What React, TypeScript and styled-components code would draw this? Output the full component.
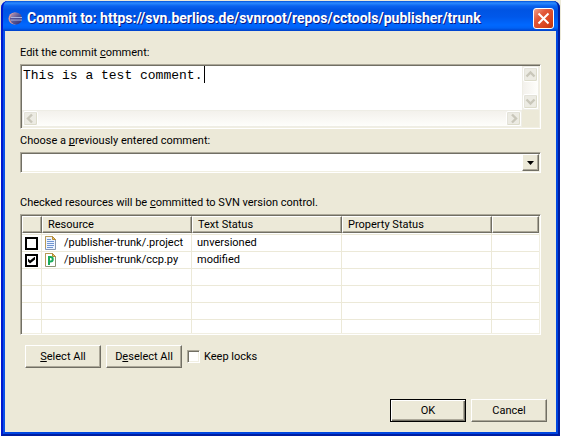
import React, { useState } from "react";
import styled, { createGlobalStyle, css } from "styled-components";

const face = "#ece9d8";
const shade = "#aca899";
const dark = "#716f64";

const GlobalStyle = createGlobalStyle`
  *, *::before, *::after { box-sizing: border-box; }
  body {
    margin: 0;
    background: linear-gradient(${face} 40px, #fff 40px);
    color: #000;
    font: 11px/14px Roboto, "Liberation Sans", Arial, sans-serif;
  }
  button, input, select { font: inherit; color: inherit; }
  u { text-underline-offset: 1px; text-decoration-thickness: 1px; text-decoration-skip-ink: none; }
`;

const Desktop = styled.div`
  min-height: 100vh;
  padding: 1px;
`;

const Dialog = styled.main`
  position: relative;
  border: 4px solid #0046e0;
  border-top: 0;
  border-left-color: #0a50e8;
  border-radius: 7px 7px 0 0;
  background: ${face};
  &::after {
    content: "";
    position: absolute;
    inset: 0 -4px -4px;
    border: 2px solid #001da0;
    border-top: 0;
    border-left-color: #0019cf;
    border-radius: 7px 7px 0 0;
    pointer-events: none;
  }
`;

const TitleBar = styled.header`
  display: flex;
  align-items: center;
  gap: 4px;
  height: 30px;
  margin: 0 -4px;
  padding: 4px 6px 0 7px;
  border-radius: 7px 7px 0 0;
  background: linear-gradient(#0050d8 0, #2b8bff 2px, #0a63ee 5px, #0054e3 9px, #0058ea 16px, #0068ff 24px, #0062f5 27px, #0040c8 30px);
`;

const Title = styled.h1`
  flex: 1;
  margin: 0;
  color: #fff;
  font: bold 14px/18px Roboto, "Noto Sans", sans-serif;
  text-shadow: 1px 1px 0 #0a1883;
  white-space: nowrap;
`;

const CloseButton = styled.button`
  display: grid;
  place-items: center;
  width: 21px;
  height: 21px;
  padding: 0;
  border: 1px solid #fff;
  border-radius: 3px;
  background: linear-gradient(135deg, #f0a08a, #e2583a 35%, #d8431c 75%, #b93510);
`;

const Content = styled.form`
  display: flex;
  flex-direction: column;
  padding: 15px 15px 10px;
`;

const Label = styled.label<{ $gap?: number }>`
  display: block;
  margin-top: ${(p) => p.$gap ?? 0}px;
  margin-bottom: 4px;
`;

const sunken = css`
  border: 1px solid;
  border-color: ${shade} #fff #fff ${shade};
  box-shadow: inset 1px 1px 0 ${dark}, inset -1px -1px 0 #f1efe2;
  background: #fff;
`;

const raised = css`
  border: 1px solid;
  border-color: #fff ${dark} ${dark} #fff;
  box-shadow: inset -1px -1px 0 ${shade};
  background: ${face};
`;

const Editor = styled.div`
  ${sunken}
  display: grid;
  grid-template: 1fr 17px / 1fr 17px;
  height: 65px;
  padding: 1px;
  background: ${face};
`;

const TextPane = styled.div`
  position: relative;
  font: 13px/17px "Liberation Mono", monospace;
  min-width: 0;
`;

const Comment = styled.textarea`
  display: block;
  width: 100%;
  height: 100%;
  padding: 1px 0 0 1px;
  border: 0;
  outline: 0;
  resize: none;
  overflow: hidden;
  background: #fff;
  color: #000;
  font: inherit;
`;

const Caret = styled.i`
  position: absolute;
  top: 0;
  left: calc(23ch + 3px);
  width: 1px;
  height: 17px;
  background: #000;
`;

const ScrollTrack = styled.div<{ $vertical?: boolean }>`
  display: flex;
  flex-direction: ${(p) => (p.$vertical ? "column" : "row")};
  justify-content: space-between;
  border: 1px solid #eeede5;
  background: linear-gradient(${(p) => (p.$vertical ? "to right" : "to bottom")}, #f3f1ec, #fefefb);
`;

const ScrollButton = styled.button`
  display: grid;
  place-items: center;
  width: 15px;
  height: 15px;
  padding: 0;
  border: 1px solid #fff;
  border-radius: 2px;
  background: #ecebe3;
  box-shadow: inset -1px -1px 0 #dddccb, inset 1px 1px 0 #e4e3da;
`;

const ComboBox = styled.div`
  ${sunken}
  display: grid;
  grid-template-columns: 1fr 17px;
  height: 21px;
  padding: 1px;
`;

const Select = styled.select`
  grid-area: 1 / 1 / 2 / 3;
  width: 100%;
  border: 0;
  outline: 0;
  appearance: none;
  background: transparent;
`;

const ComboArrow = styled.span`
  ${raised}
  grid-area: 1 / 2;
  display: grid;
  place-items: center;
  pointer-events: none;
`;

const TableFrame = styled.div`
  ${sunken}
  height: 121px;
  padding: 1px;
  overflow: hidden;
`;

const Table = styled.table`
  width: 100%;
  height: 100%;
  border-collapse: separate;
  border-spacing: 0;
  table-layout: fixed;
`;

const HeadCell = styled.th`
  ${raised}
  height: 17px;
  padding: 0 0 0 5px;
  font-weight: normal;
  text-align: left;
  line-height: 14px;
`;

const Row = styled.tr<{ $first?: boolean; $last?: boolean }>`
  height: ${(p) => (p.$last ? "auto" : p.$first ? "19px" : "17px")};
  td {
    padding: 0 0 0 5px;
    border-right: 1px solid ${face};
    border-bottom: ${(p) => (p.$last ? 0 : 1)}px solid ${face};
    line-height: 14px;
    white-space: nowrap;
    ${(p) => p.$first && css`background: linear-gradient(${face}, ${face}) 0 1px / 100% 1px no-repeat; padding-top: 2px;`}
  }
  td:first-child { padding-left: 3px; }
  td:nth-child(2) { padding-left: 3px; }
  td:last-child { border-right: 0; }
`;

const Resource = styled.span`
  display: flex;
  align-items: center;
  gap: 7px;
`;

const Check = styled.input<{ $flat?: boolean }>`
  display: grid;
  place-items: center;
  flex: none;
  width: 13px;
  height: 13px;
  margin: 0;
  appearance: none;
  ${(p) => (p.$flat ? css`border: 2px solid #000; background: #fff;` : sunken)}
  &:checked::after {
    content: "";
    width: 7px;
    height: 7px;
    background: #000;
    clip-path: polygon(0 29%, 29% 57%, 100% 0, 100% 43%, 29% 100%, 0 71%);
  }
`;

const Actions = styled.div`
  display: flex;
  align-items: center;
  gap: 5px;
  margin-top: 10px;
  padding: 0 5px;
`;

const Footer = styled.footer`
  display: flex;
  justify-content: flex-end;
  gap: 5px;
  margin: 31px -6px 0 0;
`;

const Button = styled.button<{ $primary?: boolean }>`
  ${raised}
  width: 76px;
  height: 23px;
  padding: 0;
  ${(p) =>
    p.$primary &&
    css`
      border-color: #000;
      box-shadow: inset 1px 1px 0 #fff, inset -1px -1px 0 ${dark}, inset -2px -2px 0 ${shade};
    `}
`;

const InlineLabel = styled.label`
  display: flex;
  align-items: center;
  gap: 4px;
`;

const EclipseIcon = () => (
  <svg width="15" height="15" viewBox="0 0 15 15" aria-hidden="true">
    <defs>
      <linearGradient id="orb" x1="0" y1="0" x2="1" y2="1">
        <stop offset="0" stopColor="#c9a0b4" />
        <stop offset=".5" stopColor="#5a5794" />
        <stop offset="1" stopColor="#302c72" />
      </linearGradient>
    </defs>
    <ellipse cx="6.5" cy="7.5" rx="6" ry="6" fill="#d99a9a" />
    <circle cx="8" cy="7.5" r="6" fill="url(#orb)" />
    <path d="M3 6.5h11M3 9h11" stroke="#a9b4e0" />
    <path d="M2 7.7h12" stroke="#4a4c92" />
  </svg>
);

const CloseIcon = () => (
  <svg width="13" height="13" viewBox="0 0 13 13" aria-hidden="true">
    <path d="M1.5 1.5l10 10M11.5 1.5l-10 10" stroke="#fff" strokeWidth="2" />
  </svg>
);

const arrows = {
  up: "M2.5 7.5l4-4 4 4",
  down: "M2.5 3.5l4 4 4-4",
  left: "M8 1.5l-4 4 4 4",
  right: "M5 1.5l4 4-4 4",
};

const Chevron = ({ dir }: { dir: keyof typeof arrows }) => (
  <svg width="13" height="11" viewBox="0 0 13 11" aria-hidden="true">
    <path d={arrows[dir]} fill="none" stroke="#c9c7ba" strokeWidth="2.4" />
  </svg>
);

const FileIcon = ({ python }: { python?: boolean }) => (
  <svg width="12" height="14" viewBox="0 0 12 14" aria-hidden="true">
    <path d="M.5.5h7l3 3v10H.5z" fill={python ? "#fff" : "#edf4ff"} stroke={python ? "#8b9270" : "#8797b0"} />
    <path d="M.5 12V.5h7" fill="none" stroke="#b99a55" />
    <path d="M7.5.5v3h3z" fill="#e9c56d" stroke="#b58b35" />
    {python ? (
      <path d="M4 12V4h1.5a2 2 0 0 1 0 4.5H4" fill="none" stroke="#19ab5b" strokeWidth="2" />
    ) : (
      <path d="M2 3.5h4M2 5.5h7M2 7.5h7M2 9.5h7M2 11.5h6" stroke="#7095d2" />
    )}
  </svg>
);

const resources = [
  { path: "/publisher-trunk/.project", status: "unversioned", committed: false, python: false },
  { path: "/publisher-trunk/ccp.py", status: "modified", committed: true, python: true },
];

export default function App() {
  const [checked, setChecked] = useState(resources.map((r) => r.committed));
  const [comment, setComment] = useState("This is a test comment.");

  return (
    <>
      <GlobalStyle />
      <Desktop>
        <Dialog>
          <TitleBar>
            <EclipseIcon />
            <Title>Commit to: https://svn.berlios.de/svnroot/repos/cctools/publisher/trunk</Title>
            <CloseButton type="button" aria-label="Close"><CloseIcon /></CloseButton>
          </TitleBar>
          <Content onSubmit={(e) => e.preventDefault()}>
            <Label htmlFor="comment">Edit the commit <u>c</u>omment:</Label>
            <Editor>
              <TextPane>
                <Comment id="comment" spellCheck={false} value={comment} onChange={(e) => setComment(e.target.value)} />
                <Caret />
              </TextPane>
              <ScrollTrack $vertical>
                <ScrollButton type="button" disabled aria-label="Scroll up"><Chevron dir="up" /></ScrollButton>
                <ScrollButton type="button" disabled aria-label="Scroll down"><Chevron dir="down" /></ScrollButton>
              </ScrollTrack>
              <ScrollTrack>
                <ScrollButton type="button" disabled aria-label="Scroll left"><Chevron dir="left" /></ScrollButton>
                <ScrollButton type="button" disabled aria-label="Scroll right"><Chevron dir="right" /></ScrollButton>
              </ScrollTrack>
            </Editor>
            <Label htmlFor="previous" $gap={5}>Choose a <u>p</u>reviously entered comment:</Label>
            <ComboBox>
              <Select id="previous" defaultValue=""><option value="" /></Select>
              <ComboArrow>
                <svg width="7" height="4" viewBox="0 0 7 4" aria-hidden="true"><path d="M0 0h7L3.5 4z" /></svg>
              </ComboArrow>
            </ComboBox>
            <Label as="div" id="resources" $gap={23}>Checked resources will be <u>c</u>ommitted to SVN version control.</Label>
            <TableFrame>
              <Table aria-labelledby="resources">
                <colgroup>
                  <col width="20" /><col width="150" /><col width="150" /><col width="150" /><col />
                </colgroup>
                <thead>
                  <tr>
                    <HeadCell /><HeadCell>Resource</HeadCell><HeadCell>Text Status</HeadCell>
                    <HeadCell>Property Status</HeadCell><HeadCell />
                  </tr>
                </thead>
                <tbody>
                  {resources.map((r, i) => (
                    <Row key={r.path} $first={i === 0}>
                      <td>
                        <Check
                          $flat
                          type="checkbox"
                          aria-label={r.path}
                          checked={checked[i]}
                          onChange={() => setChecked(checked.map((c, n) => (n === i ? !c : c)))}
                        />
                      </td>
                      <td><Resource><FileIcon python={r.python} />{r.path}</Resource></td>
                      <td>{r.status}</td>
                      <td />
                      <td />
                    </Row>
                  ))}
                  {[0, 1, 2, 3].map((n) => (
                    <Row key={n} $last={n === 3}><td /><td /><td /><td /><td /></Row>
                  ))}
                </tbody>
              </Table>
            </TableFrame>
            <Actions>
              <Button type="button" onClick={() => setChecked(checked.map(() => true))}><span><u>S</u>elect All</span></Button>
              <Button type="button" onClick={() => setChecked(checked.map(() => false))}><span>D<u>e</u>select All</span></Button>
              <InlineLabel><Check type="checkbox" />Keep locks</InlineLabel>
            </Actions>
            <Footer>
              <Button type="submit" $primary>OK</Button>
              <Button type="button">Cancel</Button>
            </Footer>
          </Content>
        </Dialog>
      </Desktop>
    </>
  );
}
